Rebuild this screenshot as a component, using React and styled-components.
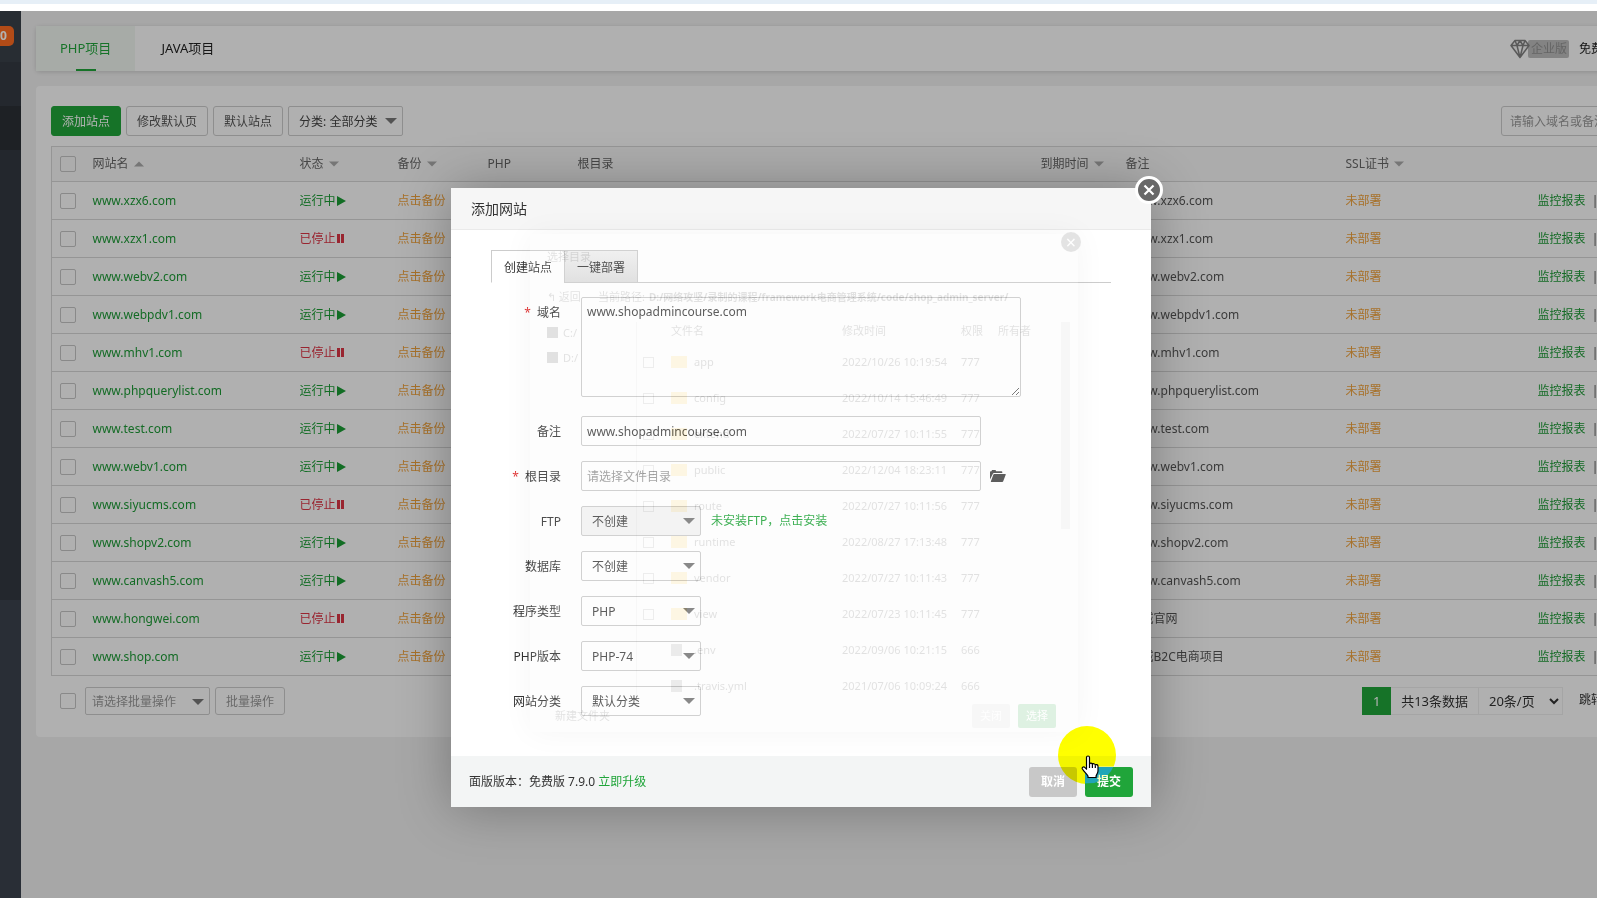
import React, { useState } from 'react';
import styled, { createGlobalStyle, css } from 'styled-components';

const SITES = [
  { name: 'www.xzx6.com', run: true },
  { name: 'www.xzx1.com', run: false },
  { name: 'www.webv2.com', run: true },
  { name: 'www.webpdv1.com', run: true },
  { name: 'www.mhv1.com', run: false },
  { name: 'www.phpquerylist.com', run: true },
  { name: 'www.test.com', run: true },
  { name: 'www.webv1.com', run: true },
  { name: 'www.siyucms.com', run: false },
  { name: 'www.shopv2.com', run: true },
  { name: 'www.canvash5.com', run: true },
  { name: 'www.hongwei.com', run: false, remark: '商城官网' },
  { name: 'www.shop.com', run: true, remark: '商城B2C电商项目' },
];

const FILES = [
  { name: 'app', date: '2022/10/26 10:19:54', perm: '777', dir: true },
  { name: 'config', date: '2022/10/14 15:46:49', perm: '777', dir: true },
  { name: 'extend', date: '2022/07/27 10:11:55', perm: '777', dir: true },
  { name: 'public', date: '2022/12/04 18:23:11', perm: '777', dir: true },
  { name: 'route', date: '2022/07/27 10:11:56', perm: '777', dir: true },
  { name: 'runtime', date: '2022/08/27 17:13:48', perm: '777', dir: true },
  { name: 'vendor', date: '2022/07/27 10:11:43', perm: '777', dir: true },
  { name: 'view', date: '2022/07/23 10:11:45', perm: '777', dir: true },
  { name: '.env', date: '2022/09/06 10:21:15', perm: '666' },
  { name: '.travis.yml', date: '2021/07/06 10:09:24', perm: '666' },
];

const SELECTS = [
  { id: 'ftp', label: 'FTP', value: '不创建', disabled: true },
  { id: 'db', label: '数据库', value: '不创建' },
  { id: 'type', label: '程序类型', value: 'PHP' },
  { id: 'version', label: 'PHP版本', value: 'PHP-74' },
  { id: 'category', label: '网站分类', value: '默认分类' },
];

const Arrow = ({ up }) => (
  <StArrow viewBox="0 0 12 6" $up={up} aria-hidden="true">
    <path d="M0 0h12L6 6z" />
  </StArrow>
);

const PlayIcon = () => (
  <StStateIcon viewBox="0 0 9 10" aria-hidden="true"><path d="M0 0L9 5L0 10z" /></StStateIcon>
);

const PauseIcon = () => (
  <StStateIcon viewBox="0 0 9 10" aria-hidden="true"><path d="M0 0h3v9H0zM4 0h3v9H4z" /></StStateIcon>
);

const DiamondIcon = () => (
  <StDiamond viewBox="0 0 20 20" aria-hidden="true">
    <path d="M5 1.5h10l4 5L10 18.5L1 6.500z M1 6.500h18 M5 1.500l2 5l3-5l3 5l2-5 M7 6.500l3 12l3-12" />
  </StDiamond>
);

const FolderOpenIcon = () => (
  <svg width="16" height="12" viewBox="0 0 16 12" aria-hidden="true">
    <path fill="#444" d="M0 9.500V2Q0 1.200 .8 1.200H1.500L2 0H5.500L6.200 1.200H11.500Q12.300 1.200 12.300 2V3H4Q3.200 3 2.900 3.700z" />
    <path fill="#444" d="M4.200 4H15.300Q16 4 15.700 4.700L13.200 11.300Q13 12 12.200 12H1.200Q.6 12 .9 11.300L3.400 4.600Q3.600 4 4.200 4z" />
  </svg>
);

const HandIcon = () => (
  <StHand viewBox="0 0 19 24" aria-hidden="true">
    <path d="M5.500 2.500a1.500 1.500 0 0 1 3 0V9c.5-1.400 2.700-1 2.900.4c.6-1.200 2.700-.8 2.900.7c.8-1 2.700-.5 2.700 1.200V16c0 2-1.500 3.500-1.900 5v1.500H7V21C5.500 19 3 16.500 1.400 14c-.8-1.400.9-2.800 2.300-1.700l1.800 1.900z" />
    <path d="M8.500 9v4M11.400 9.500v3.500M14.300 10.500v2.500" />
  </StHand>
);

const DropDown = ({ id, label, value, width, disabled, muted }) => (
  <StSelectBox $width={width}>
    <StSelect id={id} aria-label={label} disabled={disabled} $muted={muted} defaultValue={value}>
      <option>{value}</option>
    </StSelect>
    <Arrow />
  </StSelectBox>
);

const SiteRow = ({ site }) => (
  <tr>
    <StTd><StCheck type="checkbox" aria-label={site.name} /></StTd>
    <StTd><StLink href="#site">{site.name}</StLink></StTd>
    <StTd>
      <StState href="#state" $run={site.run}>
        {site.run ? '运行中' : '已停止'}{site.run ? <PlayIcon /> : <PauseIcon />}
      </StState>
    </StTd>
    <StTd><StWarnLink href="#backup">点击备份</StWarnLink></StTd>
    <StTd />
    <StTd />
    <StTd />
    <StTd><StRemark>{site.remark || site.name}</StRemark></StTd>
    <StTd><StWarnLink href="#ssl">未部署</StWarnLink></StTd>
    <StTd><StLink href="#report">监控报表</StLink>&nbsp; |</StTd>
  </tr>
);

const SiteTable = () => (
  <StTable>
    <colgroup>
      <StCol $w={33} /><StCol $w={207} /><StCol $w={98} /><StCol $w={90} /><StCol $w={90} />
      <col /><StCol $w={85} /><StCol $w={220} /><StCol $w={192} /><StCol $w={107} />
    </colgroup>
    <thead>
      <tr>
        <StTh><StCheck type="checkbox" aria-label="全选" /></StTh>
        <StTh>网站名<Arrow up /></StTh>
        <StTh>状态<Arrow /></StTh>
        <StTh>备份<Arrow /></StTh>
        <StTh>PHP</StTh>
        <StTh>根目录</StTh>
        <StTh>到期时间<Arrow /></StTh>
        <StTh>备注</StTh>
        <StTh>SSL证书<Arrow /></StTh>
        <StTh />
      </tr>
    </thead>
    <tbody>
      {SITES.map(site => <SiteRow key={site.name} site={site} />)}
    </tbody>
  </StTable>
);

// 正在淡出的目录选择窗口
const DirPicker = () => (
  <StPicker aria-hidden="true">
    <StPickerClose>×</StPickerClose>
    <StPickerTitle>选择目录</StPickerTitle>
    <StPickerPath>
      <span>↰ 返回</span>
      <span>当前路径:</span>
      <b>D:/网络攻坚/录制的课程/framework电商管理系统/code/shop_admin_server/</b>
    </StPickerPath>
    <StPickerMain>
      <StDrives>
        <StDrive>C:/</StDrive>
        <StDrive>D:/</StDrive>
      </StDrives>
      <StFiles>
        <StFileHead><span /><span>文件名</span><span>修改时间</span><span>权限</span><span>所有者</span></StFileHead>
        {FILES.map(file => (
          <StFile key={file.name}>
            <StFileBox $show={file.dir} />
            <StFileName $dir={file.dir}>{file.name}</StFileName>
            <span>{file.date}</span>
            <span>{file.perm}</span>
          </StFile>
        ))}
      </StFiles>
      <StScroll />
    </StPickerMain>
    <StPickerFoot>
      <StNewDir>新建文件夹</StNewDir>
      <StPickerBtn>关闭</StPickerBtn>
      <StPickerBtn $ok>选择</StPickerBtn>
    </StPickerFoot>
  </StPicker>
);

const AddSite = () => {
  const [domain, setDomain] = useState('www.shopadmincourse.com');
  const [remark, setRemark] = useState('www.shopadmincourse.com');
  const [path, setPath] = useState('');

  return (
    <StModal role="dialog" aria-label="添加网站">
      <StModalTitle>添加网站</StModalTitle>
      <StClose aria-label="关闭">
        <svg width="12" height="12" viewBox="0 0 12 12"><path d="M1.500 1.500L10.500 10.500M10.500 1.500L1.500 10.500" stroke="#fff" strokeWidth="2.200" /></svg>
      </StClose>
      <StModalBody>
        <StModalTabs>
          <StModalTab $on>创建站点</StModalTab>
          <StModalTab>一键部署</StModalTab>
        </StModalTabs>
        <StForm>
          <StLine>
            <StLabel htmlFor="domain"><StStar>*</StStar>域名</StLabel>
            <StArea id="domain" value={domain} onChange={e => setDomain(e.target.value)} />
          </StLine>
          <StLine $after>
            <StLabel htmlFor="remark">备注</StLabel>
            <StInput id="remark" value={remark} onChange={e => setRemark(e.target.value)} />
          </StLine>
          <StLine>
            <StLabel htmlFor="path"><StStar>*</StStar>根目录</StLabel>
            <StInput id="path" placeholder="请选择文件目录" value={path} onChange={e => setPath(e.target.value)} />
            <StIconBtn type="button" aria-label="选择目录"><FolderOpenIcon /></StIconBtn>
          </StLine>
          {SELECTS.map(item => (
            <StLine key={item.id}>
              <StLabel htmlFor={item.id}>{item.label}</StLabel>
              <DropDown id={item.id} value={item.value} width={120} disabled={item.disabled} />
              {item.disabled && <StTip href="#install">未安装FTP，点击安装</StTip>}
            </StLine>
          ))}
        </StForm>
        <DirPicker />
      </StModalBody>
      <StModalFoot>
        <span>面版版本：免费版 7.9.0 <StLink href="#upgrade" $bright>立即升级</StLink></span>
        <StFootBtns>
          <StFootBtn type="button">取消</StFootBtn>
          <StFootBtn type="button" $ok>提交</StFootBtn>
          <StSpot />
          <StSpotTint />
          <HandIcon />
        </StFootBtns>
      </StModalFoot>
    </StModal>
  );
};

export default function App() {
  return (
    <>
      <GlobalStyle />
      <StScreen>
        <StStrip />
        <StFrame>
          <StSide>
            <StSideTop><StBadge>0</StBadge></StSideTop>
            <StSideItem />
            <StSideItem $on />
            <StSideRest />
          </StSide>
          <StMain>
            <StTabBar>
              <StTab $on>PHP项目</StTab>
              <StTab>JAVA项目</StTab>
              <StVersion>
                <DiamondIcon />
                <StProTag>企业版</StProTag>
                <span>免费版</span>
              </StVersion>
            </StTabBar>
            <StPanel>
              <StToolbar>
                <StBtn type="button" $main>添加站点</StBtn>
                <StBtn type="button">修改默认页</StBtn>
                <StBtn type="button">默认站点</StBtn>
                <DropDown label="分类" value="分类: 全部分类" width={115} />
                <StSearch aria-label="搜索" placeholder="请输入域名或备注" />
              </StToolbar>
              <SiteTable />
              <StBatch>
                <StCheck type="checkbox" aria-label="全选" />
                <DropDown label="批量操作" value="请选择批量操作" width={125} muted />
                <StBtn type="button" $muted>批量操作</StBtn>
                <StPages>
                  <StPageNow>1</StPageNow>
                  <StTotal>共13条数据</StTotal>
                  <StPageSize aria-label="每页条数" defaultValue="20条/页"><option>20条/页</option></StPageSize>
                  <StJump>跳转到</StJump>
                </StPages>
              </StBatch>
            </StPanel>
          </StMain>
          <StShade>
            <AddSite />
          </StShade>
        </StFrame>
      </StScreen>
    </>
  );
}


const GlobalStyle = createGlobalStyle`
  * {
    box-sizing: border-box;
  }
  body {
    margin: 0;
    font: 12px/18px "Noto Sans", "Noto Sans CJK SC", sans-serif;
    color: #555;
  }
  button, input, select, textarea {
    font: inherit;
    color: inherit;
    margin: 0;
  }
  a {
    text-decoration: none;
  }
`;

const StScreen = styled.div`
  display: flex;
  flex-direction: column;
  height: 100vh;
`;

const StStrip = styled.div`
  flex: none;
  height: 11px;
  border-top: 4px solid #e6eff7;
  background: #fff;
`;

const StFrame = styled.div`
  position: relative;
  display: flex;
  flex: 1;
  min-height: 0;
  overflow: hidden;
  background: #efefef;
`;

const StSide = styled.nav`
  display: flex;
  flex-direction: column;
  flex: none;
  width: 21px;
  background: #343a43;
`;

const StSideTop = styled.div`
  height: 51px;
  padding-top: 15px;
  background: #3a4149;
`;

const StBadge = styled.div`
  width: 14px;
  height: 20px;
  border-radius: 0 5px 5px 0;
  background: #ff6c22;
  color: #fff;
  font-weight: bold;
  line-height: 20px;
`;

const StSideItem = styled.div`
  height: 44px;
  background: ${props => props.$on ? '#2b3036' : '#343a42'};
`;

const StSideRest = styled.div`
  flex: 1;
  background: linear-gradient(#333941 0 450px, #3b434e 450px);
`;

/* 页面比窗口宽，右侧超出部分被裁掉 */
const StMain = styled.main`
  flex: 1;
  min-width: 0;
  margin-right: -55px;
  padding: 15px 0 0 15px;
`;

const StTabBar = styled.div`
  display: flex;
  gap: 2px;
  height: 45px;
  margin-bottom: 15px;
  border-radius: 4px;
  background: #fcfcfc;
  box-shadow: 0 1px 4px rgba(0,0,0,0.15);
`;

const StTab = styled.button`
  position: relative;
  padding: 0 24px 2px;
  border: 0;
  background: none;
  font-size: 13px;
  color: #222;

  ${props => props.$on &&
    css`
      background: #f0f5f0;
      color: #20a53a;

      &::after {
        content: "";
        position: absolute;
        left: 50%;
        bottom: 0;
        width: 20px;
        height: 2px;
        margin-left: -10px;
        background: #20a53a;
      }
    `
  }
`;

const StVersion = styled.div`
  display: flex;
  align-items: center;
  margin-left: auto;
  padding-right: 37px;
  color: #222;
`;

const StDiamond = styled.svg`
  position: relative;
  width: 20px;
  height: 20px;
  margin-right: -2px;
  fill: #f4f4f4;
  stroke: #808080;
  stroke-width: 1.5;
  stroke-linejoin: round;
`;

const StProTag = styled.span`
  padding: 0 2px 0 3px;
  margin-right: 10px;
  border-radius: 2px;
  background: #bcbcbc;
  color: #909090;
`;

const StPanel = styled.section`
  padding: 20px 15px 22px;
  border-radius: 4px;
  background: #fcfcfc;
`;

const StToolbar = styled.div`
  display: flex;
  gap: 5px;
  margin-bottom: 10px;
`;

const StBtn = styled.button`
  height: 30px;
  padding: 2px 10px 0;
  border: 1px solid ${props => props.$main ? '#20a53a' : '#ccc'};
  border-radius: 3px;
  background: ${props => props.$main ? '#20a53a' : 'none'};
  ${props => props.$main && css`color: #fff;`}
  ${props => props.$muted && css`height: 28px; color: #999;`}
`;

const StSearch = styled.input`
  width: 136px;
  height: 30px;
  margin-left: auto;
  padding: 0 8px;
  border: 1px solid #ccc;
  border-radius: 3px;
  background: none;

  &::placeholder {
    color: #999;
  }
`;

const StArrow = styled.svg`
  width: 10px;
  height: 6px;
  margin-left: 5px;
  vertical-align: 1px;
  fill: #aaa;
  ${props => props.$up && css`transform: rotate(180deg);`}
`;

const StSelectBox = styled.span`
  position: relative;
  display: inline-flex;
  width: ${props => props.$width}px;

  ${StArrow} {
    position: absolute;
    right: 6px;
    top: 12px;
    width: 12px;
    fill: #777;
    pointer-events: none;
  }
`;

const StSelect = styled.select`
  appearance: none;
  width: 100%;
  height: ${props => props.$muted ? 28 : 30}px;
  padding: 2px ${props => props.$muted ? 6 : 10}px 0;
  border: 1px solid #ccc;
  border-radius: 2px;
  background: none;
  color: ${props => props.$muted ? '#999' : '#444'};

  &:disabled {
    background: #f3f3f3;
    opacity: 1;
  }
`;

const StTable = styled.table`
  width: 100%;
  table-layout: fixed;
  border-collapse: collapse;
  border: 1px solid #d6d6d6;
`;

const StCol = styled.col`
  width: ${props => props.$w}px;
`;

const cell = css`
  padding: 0 0 0 8px;
  border-bottom: 1px solid #d6d6d6;
  text-align: left;
  font-weight: normal;
  white-space: nowrap;
`;

const StTh = styled.th`
  ${cell}
  height: 35px;
  background: #f6f6f6;
  color: #666;
`;

const StTd = styled.td`
  ${cell}
  height: 38px;
`;

const StCheck = styled.input`
  appearance: none;
  display: block;
  width: 16px;
  height: 16px;
  border: 1px solid #c4c4c4;
  border-radius: 2px;
`;

const StLink = styled.a`
  color: ${props => props.$bright ? '#20a53a' : '#1d9a36'};
`;

const StWarnLink = styled.a`
  color: #f0a23c;
`;

const StRemark = styled.span`
  padding-left: 4px;
`;

const StState = styled.a`
  display: inline-flex;
  align-items: center;
  gap: 1px;
  color: ${props => props.$run ? '#1a9c34' : '#dc3545'};
`;

const StStateIcon = styled.svg`
  width: 9px;
  height: 10px;
  fill: currentColor;
`;

const StBatch = styled.div`
  display: flex;
  align-items: center;
  gap: 5px;
  padding: 11px 0 0 9px;

  > ${StCheck} {
    margin-right: 4px;
  }
`;

const StPages = styled.div`
  display: flex;
  height: 28px;
  margin-left: auto;
  font-size: 13px;
  line-height: 26px;
  color: #333;
`;

const StPageNow = styled.span`
  width: 29px;
  background: #20a53a;
  color: #fff;
  line-height: 28px;
  text-align: center;
`;

const StTotal = styled.span`
  padding: 0 10px;
  border: 1px solid #ececec;
  border-left: 0;
`;

const StPageSize = styled.select`
  width: 84px;
  padding: 0 6px;
  border: 1px solid #ececec;
  border-left: 0;
  background: none;
`;

const StJump = styled.span`
  width: 74px;
  padding-left: 16px;
  font-size: 12px;
`;

const StShade = styled.div`
  position: absolute;
  inset: 0;
  display: flex;
  justify-content: center;
  align-items: flex-start;
  padding: 177px 0 0 5px;
  background: rgba(0,0,0,0.3);
`;

const StModal = styled.div`
  position: relative;
  width: 700px;
  background: #fff;
  box-shadow: 1px 1px 50px rgba(0,0,0,0.3);
  color: #333;
`;

const StModalTitle = styled.div`
  height: 42px;
  padding-left: 20px;
  border-bottom: 1px solid #eaeaea;
  background: #f6f6f6;
  font-size: 14px;
  line-height: 42px;
`;

const StClose = styled.button`
  position: absolute;
  top: -12px;
  right: -12px;
  display: grid;
  place-items: center;
  width: 28px;
  height: 28px;
  padding: 0;
  border: 3px solid #fff;
  border-radius: 50%;
  background: #686868;
`;

const StModalBody = styled.div`
  position: relative;
  padding: 20px 40px 40px;
`;

const StModalTabs = styled.div`
  display: flex;
  height: 33px;
  border-bottom: 1px solid #ccc;
`;

const StModalTab = styled.button`
  width: 74px;
  height: 33px;
  padding: 3px 0 0;
  border: 1px solid #ccc;
  background: linear-gradient(#f0f0f0, #dedede);

  & + & {
    margin-left: -1px;
  }

  ${props => props.$on &&
    css`
      border-bottom-color: #fff;
      background: #fff;
    `
  }
`;

const StForm = styled.form`
  display: flex;
  flex-direction: column;
  gap: 15px;
  padding-top: 14px;
`;

const StLine = styled.div`
  display: flex;
  align-items: flex-start;
  ${props => props.$after && css`margin-top: 4px;`}
`;

const StLabel = styled.label`
  width: 70px;
  height: 30px;
  margin-right: 20px;
  line-height: 32px;
  text-align: right;
`;

const StStar = styled.span`
  margin-right: 6px;
  color: #e23b3b;
`;

const field = css`
  border: 1px solid #ccc;
  border-radius: 2px;
  background: #fff;
  color: #444;
`;

const StArea = styled.textarea`
  ${field}
  width: 440px;
  height: 100px;
  padding: 5px;
`;

const StInput = styled.input`
  ${field}
  width: 400px;
  height: 30px;
  padding: 0 5px;

  &::placeholder {
    color: #999;
  }
`;

const StIconBtn = styled.button`
  display: grid;
  place-items: center;
  width: 34px;
  height: 30px;
  padding: 0;
  border: 0;
  background: none;
`;

const StTip = styled.a`
  margin-left: 10px;
  color: #20a53a;
  line-height: 30px;
`;

const StModalFoot = styled.div`
  display: flex;
  align-items: center;
  justify-content: space-between;
  height: 51px;
  padding: 0 18px;
  background: #f3f5f5;
`;

const StFootBtns = styled.div`
  position: relative;
  display: flex;
  gap: 8px;
`;

const StFootBtn = styled.button`
  width: 48px;
  height: 30px;
  padding: 0;
  border: 0;
  border-radius: 3px;
  background: ${props => props.$ok ? '#20a53a' : '#c8c8c8'};
  color: #fff;
  font-weight: bold;
`;

/* 鼠标高亮圈，压在按钮上方 */
const StSpot = styled.div`
  position: absolute;
  left: 29px;
  top: -41px;
  width: 58px;
  height: 58px;
  border-radius: 50%;
  background: #ff0;
  mix-blend-mode: multiply;
  pointer-events: none;
`;

const StSpotTint = styled(StSpot)`
  background: #0000b8;
  mix-blend-mode: screen;
  clip-path: inset(41px 0 0 27px);
`;

const StHand = styled.svg`
  position: absolute;
  left: 52px;
  top: -12px;
  width: 19px;
  height: 24px;
  fill: #fff;
  stroke: #000;
  stroke-width: 1.2;
  stroke-linejoin: round;
  pointer-events: none;
`;

const StPicker = styled.div`
  position: absolute;
  left: 79px;
  right: 73px;
  top: 4px;
  bottom: 24px;
  padding: 15px 0 0 17px;
  background: #f4f4f4;
  box-shadow: 0 0 30px rgba(0,0,0,0.3);
  font-size: 11px;
  opacity: 0.14;
  pointer-events: none;
`;

const StPickerClose = styled.span`
  position: absolute;
  top: -2px;
  right: -3px;
  width: 20px;
  height: 20px;
  border-radius: 50%;
  background: #444;
  color: #fff;
  font-size: 18px;
  line-height: 20px;
  text-align: center;
`;

const StPickerTitle = styled.div`
  height: 39px;
  line-height: 16px;
`;

const StPickerPath = styled.div`
  display: flex;
  height: 34px;
  white-space: nowrap;

  span {
    width: 51px;
  }

  b {
    font-size: 10px;
  }
`;

const StPickerMain = styled.div`
  display: flex;
`;

const StDrives = styled.div`
  width: 90px;
  padding-top: 2px;
  border-right: 1px solid #ccc;
`;

const StDrive = styled.div`
  height: 25px;
  line-height: 18px;

  &::before {
    content: "";
    display: inline-block;
    width: 11px;
    height: 11px;
    margin-right: 5px;
    vertical-align: -1px;
    background: #333;
  }
`;

const StFiles = styled.div`
  flex: 1;
`;

const StFile = styled.div`
  display: grid;
  grid-template-columns: 28px 171px 119px 37px 1fr;
  align-items: center;
  height: 36px;
  padding-left: 6px;
`;

const StFileHead = styled(StFile)`
  height: 14px;
  margin-bottom: 8px;
`;

const StFileBox = styled.span`
  width: 11px;
  height: 11px;
  ${props => props.$show && css`border: 1px solid #888;`}
`;

const StFileName = styled.span`
  &::before {
    content: "";
    display: inline-block;
    width: ${props => props.$dir ? 16 : 11}px;
    height: 12px;
    margin-right: ${props => props.$dir ? 7 : 12}px;
    vertical-align: -2px;
    background: ${props => props.$dir ? '#f6c544' : '#777'};
  }
`;

const StScroll = styled.div`
  width: 9px;
  height: 207px;
  margin-right: 8px;
  background: #ccc;
`;

const StPickerFoot = styled.div`
  display: flex;
  align-items: center;
  gap: 8px;
  padding-right: 22px;
`;

const StNewDir = styled.span`
  margin: 0 auto 0 8px;
`;

const StPickerBtn = styled.span`
  width: 38px;
  height: 24px;
  border-radius: 2px;
  background: ${props => props.$ok ? '#20a53a' : '#ccc'};
  color: #fff;
  line-height: 24px;
  text-align: center;
`;
